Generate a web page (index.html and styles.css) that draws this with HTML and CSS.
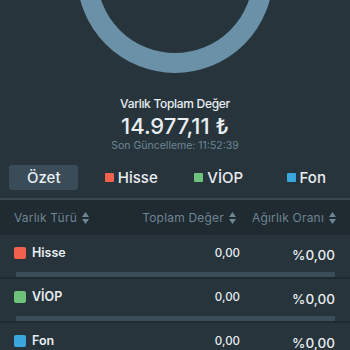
FILE: index.html
```html
<!DOCTYPE html>
<html lang="tr">
<head>
<meta charset="utf-8">
<link rel="stylesheet" href="styles.css">
</head>
<body>
<div class="page">
  <div class="chart">
    <svg width="350" height="88" viewBox="0 0 350 88">
      <circle cx="175" cy="-25" r="88" fill="none" stroke="#6a91a7" stroke-width="20"/>
    </svg>
  </div>
  <div class="summary">
    <div class="title">Varlık Toplam Değer</div>
    <div class="amount">14.977,11 ₺</div>
    <div class="time">Son Güncelleme: 11:52:39</div>
  </div>
  <div class="tabs">
    <div class="tab"><span class="tab-btn">Özet</span></div>
    <div class="tab"><span class="dot red"></span>Hisse</div>
    <div class="tab"><span class="dot green"></span>VİOP</div>
    <div class="tab"><span class="dot blue"></span>Fon</div>
  </div>
  <div class="thead">
    <div class="th th-name">Varlık Türü <svg class="sort" width="7" height="12" viewBox="0 0 7 12"><path d="M0 5 L3.5 0 L7 5 Z M0 7 L7 7 L3.5 12 Z"/></svg></div>
    <div class="th th-val">Toplam Değer <svg class="sort" width="7" height="12" viewBox="0 0 7 12"><path d="M0 5 L3.5 0 L7 5 Z M0 7 L7 7 L3.5 12 Z"/></svg></div>
    <div class="th th-pct">Ağırlık Oranı <svg class="sort" width="7" height="12" viewBox="0 0 7 12"><path d="M0 5 L3.5 0 L7 5 Z M0 7 L7 7 L3.5 12 Z"/></svg></div>
  </div>
  <div class="row">
    <div class="line">
      <div class="name"><span class="sq red"></span>Hisse</div>
      <div class="val">0,00</div>
      <div class="pct">%0,00</div>
    </div>
    <div class="bar"></div>
  </div>
  <div class="row">
    <div class="line">
      <div class="name"><span class="sq green"></span>VİOP</div>
      <div class="val">0,00</div>
      <div class="pct">%0,00</div>
    </div>
    <div class="bar"></div>
  </div>
  <div class="row">
    <div class="line">
      <div class="name"><span class="sq blue"></span>Fon</div>
      <div class="val">0,00</div>
      <div class="pct">%0,00</div>
    </div>
    <div class="bar"></div>
  </div>
</div>
</body>
</html>
```
FILE: styles.css
```css
html, body {
  margin: 0;
  padding: 0;
  background: #28343c;
  overflow: hidden;
}
.page {
  width: 350px;
  height: 350px;
  overflow: hidden;
  font-family: Inter, "Liberation Sans", sans-serif;
  color: #e9eef1;
}
.chart {
  height: 88px;
}
.chart svg {
  display: block;
}
.summary {
  padding-top: 8px;
  text-align: center;
}
.title {
  font-size: 12px;
  line-height: 16px;
  font-weight: 500;
  letter-spacing: -0.3px;
}
.amount {
  font-size: 22px;
  line-height: 26px;
  font-weight: 500;
  margin-top: 1px;
}
.time {
  font-size: 10.5px;
  line-height: 14px;
  color: #6a8795;
}
.tabs {
  display: grid;
  grid-template-columns: repeat(4, 1fr);
  margin-top: 12px;
  padding-bottom: 8px;
  border-bottom: 2px solid #3a4852;
  font-size: 15px;
  font-weight: 500;
}
.tab {
  display: flex;
  align-items: center;
  justify-content: center;
  height: 25px;
}
.tab-btn {
  display: flex;
  align-items: center;
  justify-content: center;
  width: 69px;
  height: 25px;
  background: #3a4c57;
  border-radius: 3px;
}
.dot {
  width: 9px;
  height: 9px;
  margin-right: 4px;
  border-radius: 1px;
}
.red { background: #f2614b; }
.green { background: #6cc379; }
.blue { background: #3aa8df; }
.thead {
  display: flex;
  align-items: center;
  height: 35px;
  padding: 0 14px;
  background: #1f2a31;
  color: #6e8593;
  font-size: 12px;
  letter-spacing: 0.2px;
}
.th {
  display: flex;
  align-items: center;
  gap: 5px;
}
.th-name { flex: 1; }
.th-val { justify-content: flex-end; }
.th-pct { width: 100px; justify-content: flex-end; }
.sort { fill: #6e8593; }
.row {
  padding: 11px 15px 0 14px;
  height: 31px;
  border-bottom: 2px solid #1f2a31;
}
.line {
  display: flex;
  align-items: center;
  height: 13px;
}
.name {
  flex: 1;
  display: flex;
  align-items: center;
  font-size: 12.5px;
  font-weight: 600;
}
.sq {
  width: 12px;
  height: 12px;
  border-radius: 2px;
  margin-right: 6px;
}
.val {
  font-size: 11.5px;
  font-weight: 500;
  text-align: right;
}
.pct {
  width: 95px;
  text-align: right;
  font-size: 13.5px;
  font-weight: 500;
  position: relative;
  top: 2px;
}
.bar {
  margin-top: 13px;
  margin-left: 2px;
  height: 5px;
  background: #3b4d58;
}
```
